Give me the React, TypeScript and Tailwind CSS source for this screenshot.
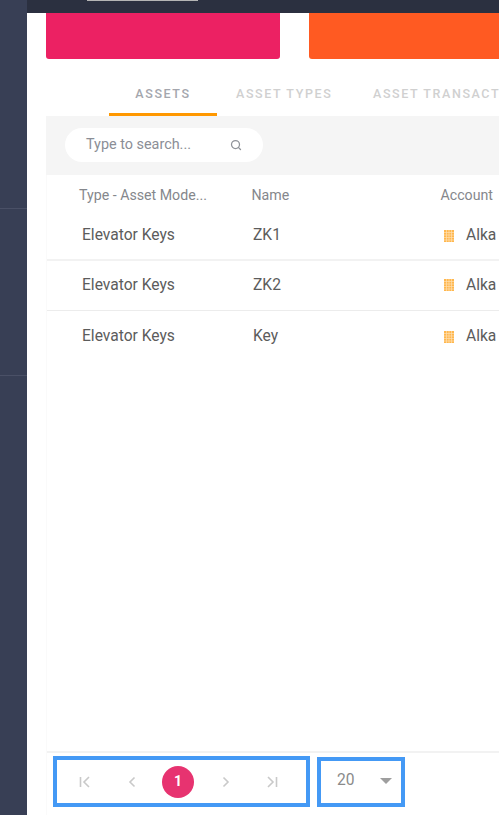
import { Search } from "lucide-react";

const rows = ["ZK1", "ZK2", "Key"];

function BuildingIcon() {
  return (
    <svg width="10" height="12" viewBox="0 0 10 12" className="shrink-0">
      <rect width="10" height="12" fill="#ffb74d" />
      <path d="M2.5 0V12M5 0V12M7.5 0V12M0 2.5H10M0 5H10M0 7.5H10M0 10H10" stroke="#ffe0b2" strokeWidth="0.7" />
    </svg>
  );
}

function PagerIcon({ d }: { d: string }) {
  return (
    <svg width="14" height="14" viewBox="0 0 14 14" fill="none" stroke="#c9c9c9" strokeWidth="1.6">
      <path d={d} />
    </svg>
  );
}

export default function App() {
  return (
    <div className="flex h-[815px] w-[499px] overflow-hidden bg-white font-['Roboto',sans-serif]">
      {/* sidebar */}
      <aside className="w-[27px] shrink-0 bg-[#383f55]">
        <div className="h-[209px] border-b border-[#4a5066]"></div>
        <div className="h-[167px] border-b border-[#4a5066]"></div>
      </aside>

      <main className="flex min-w-0 flex-1 flex-col">
        <header className="h-[13px] shrink-0 bg-[#2b3040] pl-[60px]">
          <div className="h-px w-[111px] bg-[#b5b5b5]"></div>
        </header>

        <div className="flex min-h-0 flex-1 flex-col pl-[19px]">
          {/* cards */}
          <div className="flex h-[46px] shrink-0 gap-[29px]">
            <div className="w-[234px] shrink-0 rounded-b-[3px] bg-[#ec2163]"></div>
            <div className="w-[234px] shrink-0 rounded-bl-[3px] bg-[#ff5a22]"></div>
          </div>

          {/* tabs */}
          <div className="flex h-[57px] shrink-0 pl-[63px] text-[12.5px] font-medium tracking-[1.6px] whitespace-nowrap">
            <div className="flex h-full w-[108px] shrink-0 items-center justify-center border-b-[3px] border-[#ff9800] pt-[17px] text-[#a4a6ad]">
              ASSETS
            </div>
            <div className="flex h-full w-[116px] shrink-0 items-center pl-[19px] pt-[14px] text-[#d0d0d0]">ASSET TYPES</div>
            <div className="flex h-full shrink-0 items-center pl-[40px] pt-[14px] text-[#d0d0d0]">ASSET TRANSACTIONS</div>
          </div>

          {/* search bar */}
          <div className="flex h-[59px] shrink-0 items-start bg-[#f5f5f5] pl-[19px] pt-[12px]">
            <div className="flex h-[34px] w-[198px] items-center rounded-[17px] bg-white pl-[21px] pr-[21px]">
              <span className="flex-1 pb-[1px] text-[14.4px] text-[#8b8e96]">Type to search...</span>
              <Search size={12} strokeWidth={2.5} className="text-[#8f9399]" />
            </div>
          </div>

          {/* table */}
          <div className="flex min-h-0 flex-1 flex-col border-l border-[#fafafa]">
            <div className="grid h-[38px] shrink-0 grid-cols-[172.5px_189px_1fr] items-center pl-[32px] pt-[4px] text-[14.2px] text-[#85878c]">
              <span>Type - Asset Mode...</span>
              <span>Name</span>
              <span>Account</span>
            </div>
            {rows.map((name, i) => (
              <div
                key={name}
                className={`grid shrink-0 grid-cols-[171px_191px_1fr] items-center pl-[35px] text-[15.6px] text-[#5c5c5c] ${
                  i === 0 ? "h-[48px] border-b-2 border-[#f2f2f2]" : i === 1 ? "h-[50px] border-b border-[#ececec]" : "h-[50px] pt-[2px]"
                }`}
              >
                <span>Elevator Keys</span>
                <span>{name}</span>
                <span className="flex items-center gap-[12px]">
                  <BuildingIcon />
                  Alka
                </span>
              </div>
            ))}
            <div className="flex-1"></div>

            {/* pagination */}
            <div className="flex h-[64px] shrink-0 items-start gap-[7px] border-t-2 border-[#f2f2f2] pl-[6px] pt-[3px]">
              <div className="flex h-[51px] w-[257px] shrink-0 items-center border-[4px] border-[#4499f5] pl-[21px] text-[#c9c9c9]">
                <PagerIcon d="M2.5 2V12M11 2L6 7L11 12" />
                <span className="ml-[33px]">
                  <PagerIcon d="M9.5 2.5L5 7L9.5 11.5" />
                </span>
                <span className="ml-[23px] flex h-[32px] w-[32px] items-center justify-center rounded-full bg-[#e73370] text-[14px] font-bold text-white">
                  1
                </span>
                <span className="ml-[25px]">
                  <PagerIcon d="M4.5 2.5L9 7L4.5 11.5" />
                </span>
                <span className="ml-[32px]">
                  <PagerIcon d="M3 2L8 7L3 12M11.5 2V12" />
                </span>
              </div>
              <div className="mt-[1px] flex h-[50px] w-[88px] shrink-0 items-center justify-between border-[4px] border-[#4499f5] pl-[16px] pr-[9px] pb-[3px]">
                <span className="text-[15.6px] text-[#8a8a8a]">20</span>
                <span className="h-0 w-0 border-x-[6.5px] border-t-[6.5px] border-x-transparent border-t-[#9e9e9e]"></span>
              </div>
            </div>
          </div>
        </div>
      </main>
    </div>
  );
}
